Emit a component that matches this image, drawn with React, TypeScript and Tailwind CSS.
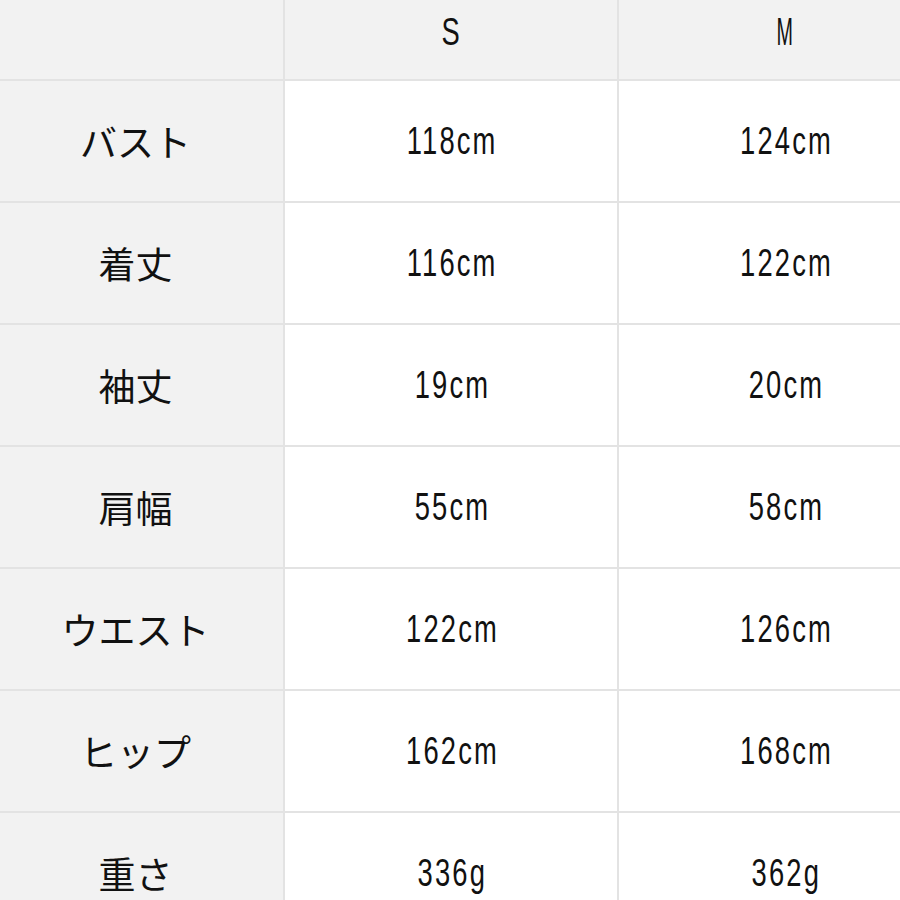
const rows = [
  { label: "バスト", s: "118cm", m: "124cm" },
  { label: "着丈", s: "116cm", m: "122cm" },
  { label: "袖丈", s: "19cm", m: "20cm" },
  { label: "肩幅", s: "55cm", m: "58cm" },
  { label: "ウエスト", s: "122cm", m: "126cm" },
  { label: "ヒップ", s: "162cm", m: "168cm" },
  { label: "重さ", s: "336g", m: "362g" },
];

const num = "font-['Liberation_Sans',sans-serif] text-[38px] text-[#111] leading-none";
const jp = "font-['Noto_Sans_CJK_JP',sans-serif] text-[37px] text-[#111] leading-none";

export default function App() {
  return (
    <div className="h-[900px] w-[900px] overflow-hidden bg-white">
      <div className="grid w-[1000px] grid-cols-[283px_332px_332px] gap-[2px] bg-[#e3e3e3]">
        <div className="h-[79px] bg-[#f2f2f2]" />
        <div className={`flex h-[79px] items-center justify-center bg-[#f2f2f2] pb-[16px] ${num}`}>
          <span className="inline-block scale-x-[0.72]">S</span>
        </div>
        <div className={`flex h-[79px] items-center justify-center bg-[#f2f2f2] pb-[16px] ${num}`}>
          <span className="inline-block scale-x-[0.52]">M</span>
        </div>
        {rows.map((r) => (
          <Row key={r.label} {...r} />
        ))}
      </div>
    </div>
  );
}

function Row({ label, s, m }: { label: string; s: string; m: string }) {
  return (
    <>
      <div className={`flex h-[120px] items-center justify-center bg-[#f2f2f2] pr-[12px] ${jp}`}>{label}</div>
      <div className={`flex h-[120px] items-center justify-center bg-white pl-[3px] ${num}`}>
        <span className="inline-block scale-x-[0.72] tracking-[3px]">{s}</span>
      </div>
      <div className={`flex h-[120px] items-center justify-center bg-white pl-[3px] ${num}`}>
        <span className="inline-block scale-x-[0.72] tracking-[3px]">{m}</span>
      </div>
    </>
  );
}
